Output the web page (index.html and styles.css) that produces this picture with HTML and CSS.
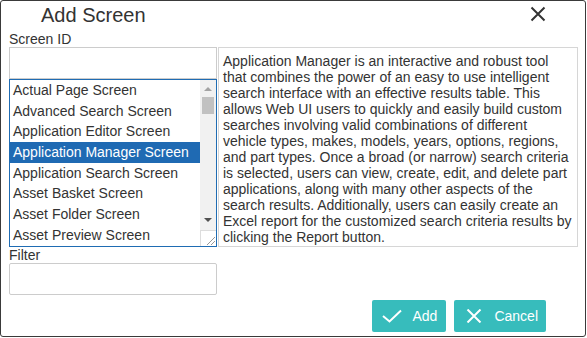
FILE: index.html
```html
<!DOCTYPE html>
<html lang="en">
<head>
    <meta charset="UTF-8">
    <title>Add Screen</title>
    <link rel="stylesheet" href="styles.css">
</head>
<body>
    <div class="dialog">
        <header class="dialog-header">
            <h1>Add Screen</h1>
            <button class="close-btn" title="Close">
                <svg width="16" height="16" viewBox="0 0 16 16">
                    <path d="M1.5 1.5 L14.5 14.5 M14.5 1.5 L1.5 14.5" stroke="#333" stroke-width="2" fill="none"/>
                </svg>
            </button>
        </header>

        <main class="dialog-body">
            <label class="field-label">Screen ID</label>
            <input class="text-input id-input" type="text">

            <div class="listbox">
                <ul class="list-items">
                    <li>Actual Page Screen</li>
                    <li>Advanced Search Screen</li>
                    <li>Application Editor Screen</li>
                    <li class="selected">Application Manager Screen</li>
                    <li>Application Search Screen</li>
                    <li>Asset Basket Screen</li>
                    <li>Asset Folder Screen</li>
                    <li>Asset Preview Screen</li>
                </ul>
                <div class="scrollbar">
                    <span class="arrow up"></span>
                    <span class="thumb"></span>
                    <span class="arrow down"></span>
                    <span class="grip">
                        <svg width="16" height="16" viewBox="0 0 16 16">
                            <path d="M14 6 L6 14 M14 10 L10 14" stroke="#999" stroke-width="1" fill="none"/>
                        </svg>
                    </span>
                </div>
            </div>

            <div class="description">
                Application Manager is an interactive and robust tool that combines the power of an easy to use intelligent search interface with an effective results table. This allows Web UI users to quickly and easily build custom searches involving valid combinations of different vehicle types, makes, models, years, options, regions, and part types. Once a broad (or narrow) search criteria is selected, users can view, create, edit, and delete part applications, along with many other aspects of the search results. Additionally, users can easily create an Excel report for the customized search criteria results by clicking the Report button.
            </div>

            <label class="field-label filter-label">Filter</label>
            <input class="text-input filter-input" type="text">
        </main>

        <footer class="dialog-footer">
            <button class="btn btn-add">
                <svg width="20" height="14" viewBox="0 0 20 14">
                    <path d="M1 7 L7.5 12.5 L19 1.5" stroke="#fff" stroke-width="2" fill="none"/>
                </svg>
                Add
            </button>
            <button class="btn btn-cancel">
                <svg width="16" height="14" viewBox="0 0 16 14">
                    <path d="M1.5 0.5 L14.5 13.5 M14.5 0.5 L1.5 13.5" stroke="#fff" stroke-width="2" fill="none"/>
                </svg>
                Cancel
            </button>
        </footer>
    </div>
</body>
</html>
```

FILE: styles.css
```css
* {
    margin: 0;
    padding: 0;
    box-sizing: border-box;
    font-family: "Liberation Sans", Arial, sans-serif;
}

body {
    background-color: #fff;
    color: #333;
}

/* Dialog */
.dialog {
    width: 586px;
    height: 337px;
    border: 1px solid #3a3a3a;
    border-radius: 3px;
    background-color: #fff;
    padding: 0 7px 0 8px;
    display: flex;
    flex-direction: column;
}

.dialog-header {
    height: 30px;
    display: flex;
    align-items: flex-start;
    justify-content: space-between;
}

.dialog-header h1 {
    font-size: 20px;
    font-weight: normal;
    line-height: 24px;
    padding-top: 2px;
    margin-left: 32px;
}

.close-btn {
    background: none;
    border: none;
    margin: 5px 32px 0 0;
    width: 16px;
    height: 16px;
    cursor: pointer;
}

.close-btn svg {
    display: block;
}

/* Body */
.dialog-body {
    display: grid;
    grid-template-columns: 208px 360px;
    grid-template-rows: 16px 32px 168px 16px 32px;
    column-gap: 1px;
}

.field-label {
    font-size: 14px;
    line-height: 16px;
    grid-column: 1;
}

.text-input {
    grid-column: 1;
    height: 32px;
    border: 1px solid #ccc;
    border-radius: 2px;
    font-size: 14px;
    padding: 0 6px;
    outline: none;
}

.id-input {
    grid-row: 2;
    border-radius: 0;
}

.filter-label {
    grid-row: 4;
}

.filter-input {
    grid-row: 5;
}

/* List box */
.listbox {
    grid-column: 1;
    grid-row: 3;
    border: 1px solid #1f6cb3;
    display: flex;
    overflow: hidden;
}

.list-items {
    list-style: none;
    flex: 1;
}

.list-items li {
    height: 20.7px;
    line-height: 20.7px;
    font-size: 14px;
    padding-left: 3px;
    white-space: nowrap;
}

.list-items li.selected {
    background-color: #1f6ab3;
    color: #fff;
}

.scrollbar {
    width: 16px;
    background-color: #f1f1f1;
    position: relative;
}

.arrow {
    position: absolute;
    left: 4px;
    width: 0;
    height: 0;
    border-left: 4px solid transparent;
    border-right: 4px solid transparent;
}

.arrow.up {
    top: 7px;
    border-bottom: 4px solid #a3a3a3;
}

.arrow.down {
    top: 138px;
    border-top: 4px solid #505050;
}

.thumb {
    position: absolute;
    left: 2px;
    top: 17px;
    width: 12px;
    height: 17px;
    background-color: #c1c1c1;
}

.grip {
    position: absolute;
    left: 0;
    bottom: 0;
    width: 16px;
    height: 16px;
    background-color: #fff;
    border-left: 1px solid #ddd;
    border-top: 1px solid #ddd;
}

.grip svg {
    display: block;
}

/* Description */
.description {
    grid-column: 2;
    grid-row: 2 / 4;
    border: 1px solid #d6d6d6;
    padding: 5px 4px;
    font-size: 14px;
    line-height: 16px;
}

/* Footer */
.dialog-footer {
    display: flex;
    justify-content: flex-end;
    gap: 8px;
    margin-top: 5px;
    padding-right: 32px;
}

.btn {
    height: 32px;
    display: flex;
    align-items: center;
    background-color: #37bcbc;
    color: #fff;
    border: none;
    border-radius: 2px;
    font-size: 14px;
    cursor: pointer;
}

.btn-add {
    padding: 0 9px 0 10px;
    gap: 10px;
}

.btn-cancel {
    padding: 0 8px 0 12px;
    gap: 12px;
}

.btn svg {
    display: block;
}
```
